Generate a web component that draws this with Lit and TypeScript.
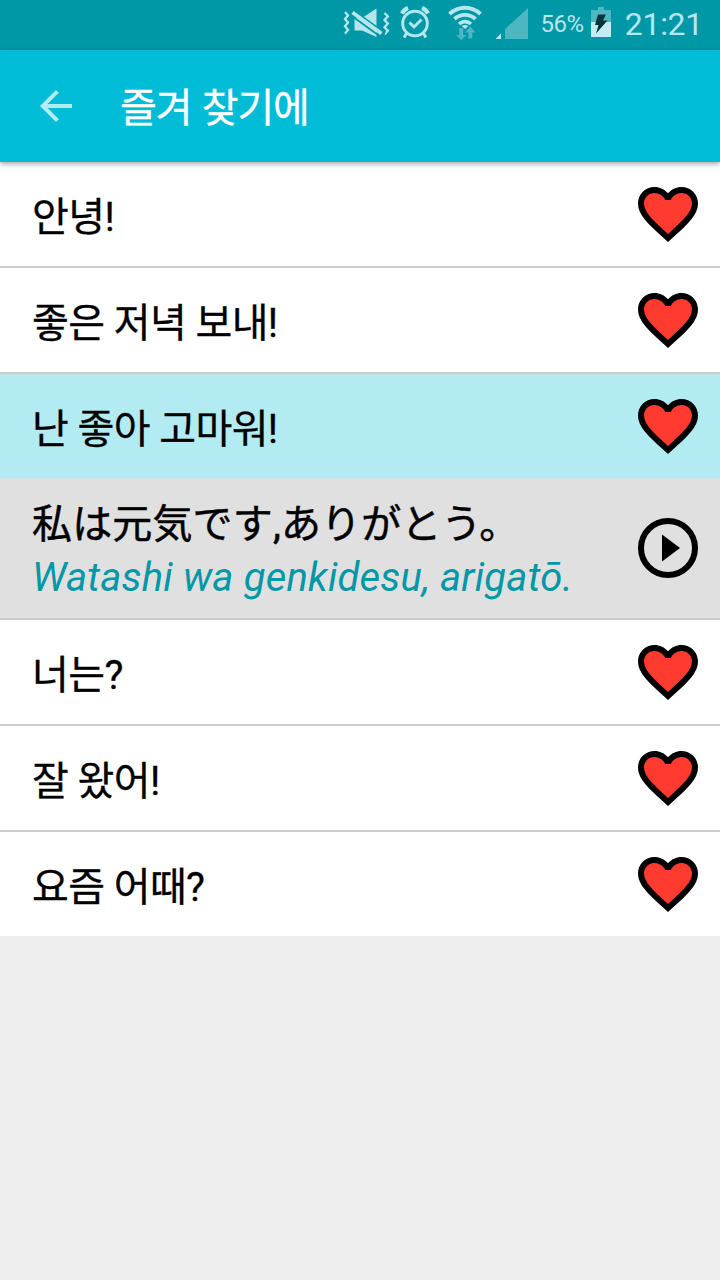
import { LitElement, html, svg, css } from "lit";
import { customElement, property } from "lit/decorators.js";

const muteIcon = svg`<svg width="47" height="32" viewBox="0 0 47 32" fill="none">
  <path d="M2 4l3 3.400L2 11l3 3.600L2 18.200l3 3.600L2 25.600M41.500 5l3.400 3.400-3.400 3.600 3.400 3.600-3.400 3.600 3.400 3.600-3.400 3.800" stroke="#b5e6ec" stroke-width="2.300"/>
  <path d="M11.500 10h7.500L33.500 0.500V29L19 22.500h-7.500z" fill="#b5e6ec"/>
  <path d="M11 3L42 25.500" stroke="#0097a7" stroke-width="2.400"/>
  <path d="M8.500 7.800L36 27.800" stroke="#0097a7" stroke-width="1.800"/>
  <path d="M9.500 4.500L38.500 25.500" stroke="#b5e6ec" stroke-width="3.800"/>
</svg>`;

const alarmIcon = svg`<svg width="32" height="34" viewBox="0 0 32 34" fill="none" stroke="#b5e6ec">
  <circle cx="16" cy="18.500" r="12.300" stroke-width="3"/>
  <path d="M10.500 17.500l4.500 4.500 7.500-7.500" stroke-width="3"/>
  <path d="M3 8.500q2-4 6-5.500M29 8.500q-2-4-6-5.500" stroke-width="4.200"/>
  <path d="M7.500 28.500l-2.500 4M24.500 28.500l2.500 4" stroke-width="3"/>
</svg>`;

const wifiIcon = svg`<svg width="34" height="36" viewBox="0 0 34 36" fill="none">
  <path d="M1.500 8.500C10.500.2 23.500.2 32.500 8.500" transform="translate(0 .5)" stroke="#b5e6ec" stroke-width="3.800"/>
  <path d="M6.500 14c6-5.500 15-5.500 21 0" stroke="#b5e6ec" stroke-width="3.800"/>
  <path d="M11 19c3.500-3.200 8.500-3.200 12 0" stroke="#b5e6ec" stroke-width="3.600"/>
  <path d="M13.500 21q3.500-2 7 0L17 24z" fill="#b5e6ec"/>
  <path d="M11.200 23h4v7h3.300L13.200 35 8 30h3.200zM20.300 33.500h4v-6H27.500l-5.200-6-5.200 6h3.200z" fill="#4db6c1"/>
</svg>`;

const signalIcon = svg`<svg width="34" height="34" viewBox="0 0 34 34">
  <path d="M10 32V22L33 1v31z" fill="#4db6c1"/>
  <path d="M0.500 32L6 26.500V32z" fill="#b5e6ec"/>
</svg>`;

const batteryIcon = svg`<svg width="20" height="30" viewBox="0 0 20 30">
  <path d="M0 3h7V0h6v3h7v12H0z" fill="#4db6c1"/>
  <path d="M0 15h20v15H0z" fill="#c3edf2"/>
  <path d="M7 7.500h8l-3 6h4.500L5 26.500l2.500-8.500H4z" fill="#07343a"/>
</svg>`;

const arrowIcon = svg`<svg width="48" height="48" viewBox="0 0 24 24">
  <path d="M20 11H7.830l5.590-5.590L12 4l-8 8 8 8 1.410-1.410L7.830 13H20v-2z" fill="#b2ebf2"/>
</svg>`;

const heartIcon = svg`<svg width="72" height="72" viewBox="0 0 24 24">
  <path d="M12 21.350l-1.450-1.320C5.400 15.360 2 12.280 2 8.500 2 5.420 4.420 3 7.500 3c1.740 0 3.410.810 4.500 2.090C13.090 3.810 14.760 3 16.500 3 19.580 3 22 5.420 22 8.500c0 3.780-3.400 6.860-8.550 11.540L12 21.350z"/>
  <path fill="#ff3b2f" d="M12.100 18.550l-.1.100-.110-.100C7.140 14.240 4 11.390 4 8.500 4 6.500 5.500 5 7.500 5c1.540 0 3.040.990 3.570 2.360h1.870C13.460 5.990 14.960 5 16.500 5c2 0 3.500 1.500 3.500 3.500 0 2.890-3.140 5.740-7.900 10.050z"/>
</svg>`;

const playIcon = svg`<svg width="72" height="72" viewBox="0 0 24 24">
  <circle cx="12" cy="12" r="9" fill="none" stroke="#000" stroke-width="2"/>
  <path d="M10 16.500l6-4.500-6-4.500z"/>
</svg>`;

@customElement("status-bar")
class StatusBar extends LitElement {
  static styles = css`
    :host {
      display: flex;
      align-items: flex-start;
      justify-content: flex-end;
      height: 50px;
      box-sizing: border-box;
      padding-right: 17px;
      background: #0097a7;
      color: #b5e6ec;
      font-family: Roboto, sans-serif;
    }
    svg { display: block; flex: none; }
    .mute { margin: 8px 9px 0 0; }
    .alarm { margin: 5px 17px 0 0; }
    .wifi { margin: 5px 13px 0 0; }
    .signal { margin: 7px 11px 0 0; }
    .percent { font-size: 24px; line-height: 28px; margin: 10px 7px 0 0; letter-spacing: -0.4px; }
    .battery { margin: 7px 14px 0 0; }
    .clock { font-size: 32px; line-height: 40px; margin-top: 4px; letter-spacing: -0.3px; }
  `;
  render() {
    return html`
      <div class="mute">${muteIcon}</div>
      <div class="alarm">${alarmIcon}</div>
      <div class="wifi">${wifiIcon}</div>
      <div class="signal">${signalIcon}</div>
      <div class="percent">56%</div>
      <div class="battery">${batteryIcon}</div>
      <div class="clock">21:21</div>
    `;
  }
}

@customElement("phrase-row")
class PhraseRow extends LitElement {
  @property() text = "";
  @property() translation = "";
  @property() reading = "";
  static styles = css`
    :host { display: block; }
    .phrase, .answer {
      display: flex;
      align-items: center;
      justify-content: space-between;
      box-sizing: border-box;
      padding: 0 16px 0 32px;
    }
    .phrase { height: 104px; background: #fff; }
    .phrase.open { background: #b2ebf2; }
    .answer { height: 140px; background: #e0e0e0; }
    .label {
      padding-top: 7px;
      font-size: 40px;
      line-height: 48px;
      letter-spacing: -0.6px;
      white-space: nowrap;
      -webkit-text-stroke: 0.3px #000;
    }
    .lines { padding-top: 6px; }
    .japanese {
      font-family: Roboto, "Noto Sans CJK JP", sans-serif;
      font-size: 40px;
      line-height: 54px;
      letter-spacing: 0.15px;
      white-space: nowrap;
      -webkit-text-stroke: 0.5px #000;
    }
    .reading {
      font-size: 40px;
      line-height: 52px;
      font-style: italic;
      letter-spacing: 0.2px;
      color: #0097a7;
      white-space: nowrap;
    }
    svg { display: block; }
  `;
  render() {
    return html`
      <div class="phrase ${this.translation ? "open" : ""}">
        <div class="label" lang="ko">${this.text}</div>
        ${heartIcon}
      </div>
      ${this.translation
        ? html`<div class="answer">
            <div class="lines">
              <div class="japanese" lang="ja">${this.translation}</div>
              <div class="reading">${this.reading}</div>
            </div>
            ${playIcon}
          </div>`
        : ""}
    `;
  }
}

@customElement("app-root")
class AppRoot extends LitElement {
  static styles = css`
    :host {
      display: flex;
      flex-direction: column;
      height: 1280px;
      background: #eee;
      color: #000;
      font-family: Roboto, "Noto Sans CJK KR", sans-serif;
    }
    .bar {
      display: flex;
      align-items: center;
      gap: 40px;
      height: 112px;
      box-sizing: border-box;
      padding-left: 32px;
      background: #00bcd7;
      box-shadow: 0 2px 5px rgba(0, 0, 0, 0.35);
      z-index: 1;
    }
    .bar svg { display: block; }
    .title {
      padding-top: 6px;
      color: #fff;
      font-size: 40px;
      line-height: 48px;
      letter-spacing: -1.1px;
      word-spacing: 1.5px;
      -webkit-text-stroke: 0.3px #fff;
    }
    .list { display: flex; flex-direction: column; gap: 2px; background: #ccc; }
  `;
  phrases = [
    { text: "안녕!" },
    { text: "좋은 저녁 보내!" },
    { text: "난 좋아 고마워!", translation: "私は元気です,ありがとう。", reading: "Watashi wa genkidesu, arigatō." },
    { text: "너는?" },
    { text: "잘 왔어!" },
    { text: "요즘 어때?" },
  ];
  render() {
    return html`
      <status-bar></status-bar>
      <div class="bar">
        ${arrowIcon}
        <div class="title" lang="ko">즐겨 찾기에</div>
      </div>
      <div class="list">
        ${this.phrases.map(
          (p) => html`<phrase-row .text=${p.text} .translation=${p.translation ?? ""} .reading=${p.reading ?? ""}></phrase-row>`
        )}
      </div>
    `;
  }
}
